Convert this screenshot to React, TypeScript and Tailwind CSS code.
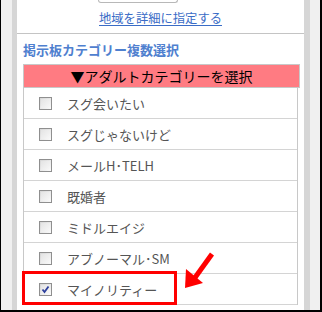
import React from "react";

const items = [
  { label: "スグ会いたい", checked: false },
  { label: "スグじゃないけど", checked: false },
  { label: "メールH･TELH", checked: false },
  { label: "既婚者", checked: false },
  { label: "ミドルエイジ", checked: false },
  { label: "アブノーマル･SM", checked: false },
  { label: "マイノリティー", checked: true },
];

function Box({ checked }: { checked: boolean }) {
  return (
    <div className="w-[13px] h-[13px] border border-[#8f8f8f] bg-gradient-to-br from-[#d6d6d6] to-[#fbfbfb] flex items-center justify-center shrink-0">
      <div className="w-[9px] h-[9px] bg-gradient-to-br from-[#e4e4e4] to-[#f8f8f8] flex items-center justify-center">
        {checked && (
          <svg width="9" height="9" viewBox="0 0 9 9">
            <path d="M1.5 4.5 L3.5 7 L7.5 1.5" stroke="#2d3f9c" strokeWidth="1.8" fill="none" />
          </svg>
        )}
      </div>
    </div>
  );
}

export default function App() {
  return (
    <div
      className="relative w-[322px] h-[312px] bg-black overflow-hidden"
      style={{ fontFamily: '"Noto Sans CJK JP", "Liberation Sans", sans-serif' }}
    >
      <div className="flex h-[310px]">
        <div className="w-[1px] bg-black" />
        <div className="w-[11px] bg-[#f0f0f0]" />
        <div className="w-[5px] bg-[#d6d6d6]" />
        <div className="w-[287px] bg-white flex flex-col">
          <div className="ml-[81px] w-[80px] h-[3px] border-x border-b border-[#b8b8b8] rounded-b-[3px]" />
          <div className="h-[30px] flex items-center justify-center">
            <span className="text-[12.3px] leading-none text-[#3a6cc6] underline underline-offset-2">地域を詳細に指定する</span>
          </div>
          <div className="h-px bg-[#c4c4c4]" />
          <div className="h-[30px] flex items-center pl-[6px]">
            <span className="text-[13px] leading-none font-bold text-[#4f80cf]">掲示板カテゴリー複数選択</span>
          </div>
          <div className="ml-[6px] w-[277px] h-[24px] bg-[#ff7b82] border border-[#c8c8c8] flex items-center justify-center">
            <span className="text-[14px] leading-none text-black">▼アダルトカテゴリーを選択</span>
          </div>
          <div className="ml-[6px] w-[275px] border-x border-[#c8c8c8] flex flex-col">
            {items.map((it) => (
              <div key={it.label} className="h-[31px] border-b border-[#d4d4d4] flex items-center pl-[15px] gap-[15px]">
                <Box checked={it.checked} />
                <span className="text-[13px] leading-none text-[#555555]">{it.label}</span>
              </div>
            ))}
          </div>
        </div>
        <div className="w-[6px] bg-[#d6d6d6]" />
        <div className="w-[10px] bg-[#f0f0f0]" />
        <div className="w-[2px] bg-black" />
      </div>
      <div className="absolute left-[22px] top-[271px] w-[155px] h-[34px] border-[3px] border-[#ff0000]" />
      <svg className="absolute left-0 top-0 pointer-events-none" width="322" height="312">
        <line x1="212" y1="254" x2="194" y2="279" stroke="#ff0000" strokeWidth="5" />
        <polygon points="185,288 186,269 203,283" fill="#ff0000" />
      </svg>
    </div>
  );
}
